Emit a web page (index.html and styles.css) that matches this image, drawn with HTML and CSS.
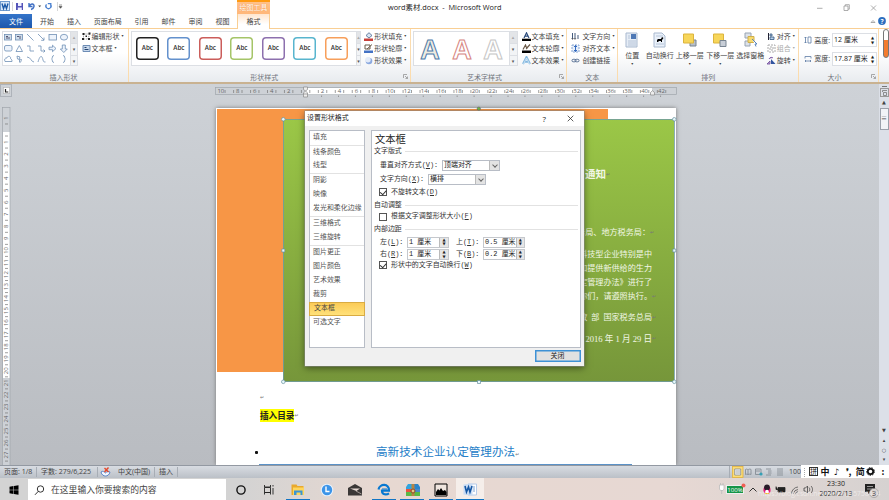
FILE: index.html
```html
<!DOCTYPE html>
<html lang="zh-CN">
<head>
<meta charset="utf-8">
<title>word素材.docx - Microsoft Word</title>
<link rel="stylesheet" href="styles.css">
</head>
<body>
<div class="app">
  <header class="titlebar">
    <div class="quick">
      <svg width="66" height="14" viewBox="0 0 66 14">
        <rect x="0.5" y="1.5" width="9" height="9" fill="#d9e8f8" stroke="#6f9bcf"/><path d="M2 3.5l1.5 5L5 4.5l1.5 4L8 3.5" fill="none" stroke="#1c5aa8" stroke-width="1.4"/>
        <path d="M12.5 2v9M57.5 2v9" stroke="#c4c4c4" stroke-width=".7"/>
        <path d="M16 3h7v7h-7z" fill="#5353b8"/><path d="M18 3h3.500v3H18zM17.800 7.500h4v2.500h-4z" fill="#eef"/>
        <path d="M29 3v3.500h3.500M29.500 6c1-3 5-2.500 4.500.500-.3 1.500-1.500 2.500-3 3" fill="none" stroke="#3f6fc4" stroke-width="1.400"/>
        <path d="M38.200 5.500h3l-1.500 1.800z" fill="#444"/>
        <path d="M46.500 4.300a2.600 2.600 0 1 0 4 0M50.800 6.500V3.600h-3" fill="none" stroke="#4a80d0" stroke-width="1.300"/>
        <path d="M59 5h3M59 6.500h3l-1.500 1.800z" stroke="#555" stroke-width=".6" fill="#444"/>
      </svg>
    </div>
    <div class="context-title">绘图工具</div>
    <div class="doc-title">word素材.docx&nbsp; -&nbsp; Microsoft Word</div>
    <svg class="window-buttons" width="66" height="14" viewBox="0 0 66 14" fill="none" stroke="#999" stroke-width=".8"><path d="M2 8.300h5.500M29 6h4v4.500h-4zM30.300 6V4.700h4v4.500H33M56 5.500l5 5M61 5.500l-5 5"/></svg>
  </header>

  <nav class="tabs">
    <span class="file-tab">文件</span><span class="tab">开始</span><span class="tab">插入</span><span class="tab wide">页面布局</span><span class="tab">引用</span><span class="tab">邮件</span><span class="tab">审阅</span><span class="tab">视图</span><span class="tab active">格式</span>
    <svg class="help" width="20" height="12" viewBox="0 0 20 12"><path d="M2 7.500l2-2 2 2z" fill="#fff" stroke="#888" stroke-width=".7"/><circle cx="13" cy="6" r="3.900" fill="#2c6fc0"/><text x="13" y="8.500" text-anchor="middle" font-size="6.500" font-weight="bold" fill="#fff">?</text></svg>
  </nav>

  <section class="ribbon">
    <div class="group g-insert">
      <div class="tools">
        <div class="gallery">
          <svg width="67" height="33" viewBox="0 0 67 33" fill="none" stroke="#6f8fb5" stroke-width=".8">
            <rect x="1.500" y="2.500" width="7" height="5.500" fill="#cfdcea"/><path d="M3 4.500h2M3 6h4" stroke="#335"/>
            <rect x="12.500" y="2.500" width="7" height="5.500" fill="#cfdcea"/><path d="M17 4v3M14 4.500h2" stroke="#335"/>
            <path d="M24 2l6.500 6.500M35 2l6 6m0-2.500v2.800h-2.800"/>
            <rect x="46" y="2.500" width="7.500" height="5.500" fill="#edf3fb"/><ellipse cx="61" cy="5.200" rx="3.600" ry="2.900" fill="#edf3fb"/>
            <rect x="1.500" y="13.500" width="7.500" height="5.500" rx="1.500" fill="#edf3fb"/><path d="M13 19.500l3.300-6 3.200 6zM24 14h3v5h4M35 14h3v5h4m-1.500-1.500l1.500 1.500-1.500 1.500"/>
            <path d="M46 15.200h3.500v-2l3.500 3.300-3.500 3.200v-2H46zM59.300 13v4h-2l3.500 3.500 3.500-3.500h-2v-4z" fill="#edf3fb"/>
            <path d="M2 29.500c-1-2 0-4 2-3.500 0-2.500 4-2 3.500 0-.5 1 2 1 1.500 3.500zM14 24l3 1-1 2 2.500.500-1 3M14 24l.5 3 2 .500v3M24 25c4 0 4 5 7 5M35 30c2-7 4-7 5-2 .5 2 1 2 2.500 2M51 23.500c-2.500 0-1 3-2.500 3.500 1.500.500 0 3.500 2.500 3.500M60 23.500c2.500 0 1 3 2.500 3.500-1.500.500 0 3.500-2.500 3.500"/>
          </svg>
          <div class="scroller"><i class="off">▴</i><i>▾</i><i>▾</i></div>
        </div>
        <div class="commands c1">
          <div class="cmd"><svg class="ic" viewBox="0 0 9 9"><path d="M1.500 2l6 0-1.500 5-4.500 0z" fill="none" stroke="#888" stroke-dasharray="1"/><path d="M.5 1h2v2h-2zM6.500.500h2v2h-2zM0 6h2v2H0zM6 6h2v2H6zM3.500 3.500h1.500v1.500H3.500z" fill="#222"/></svg><span>编辑形状</span><b>▾</b></div>
          <div class="cmd"><svg class="ic" viewBox="0 0 9 9"><path d="M1 1.500h7v6H1z" fill="#c9d9ec" stroke="#6d8cb5"/><path d="M2.500 3.500h2M2.500 5.500h4" stroke="#24436f"/></svg><span>文本框</span><b>▾</b></div>
        </div>
      </div>
      <div class="caption">插入形状</div>
    </div>

    <div class="group g-style">
      <div class="tools">
        <div class="gallery swatches">
          <div class="swatch s-black">Abc</div><div class="swatch s-blue">Abc</div><div class="swatch s-red">Abc</div><div class="swatch s-green">Abc</div><div class="swatch s-purple">Abc</div><div class="swatch s-teal">Abc</div><div class="swatch s-orange">Abc</div>
          <div class="scroller"><i class="off">▴</i><i>▾</i><i>▾</i></div>
        </div>
        <div class="commands c2">
          <div class="cmd"><svg class="ic" viewBox="0 0 9 9"><path d="M2 3.500L5 .700l3 2.800L5 6z" fill="#d7e4f3" stroke="#46638c" stroke-width=".8"/><path d="M0 6.500h9V9H0z" fill="#c8403a"/></svg><span>形状填充</span><b>▾</b></div>
          <div class="cmd"><svg class="ic" viewBox="0 0 9 9"><path d="M1 1h5v4H1zM3 5L8 .5" fill="none" stroke="#6b5a48"/><path d="M0 6.500h9V9H0z" fill="#4472c4"/></svg><span>形状轮廓</span><b>▾</b></div>
          <div class="cmd"><svg class="ic" viewBox="0 0 9 9"><circle cx="5" cy="5" r="3.300" fill="#8ba9df"/><circle cx="4" cy="3.800" r="2.700" fill="#e3ebf8"/></svg><span>形状效果</span><b>▾</b></div>
        </div>
      </div>
      <div class="caption">形状样式</div><svg class="launch" viewBox="0 0 5 5"><path d="M.5 4V.5H4M2 2l2.300 2.300M4.500 2.500v2h-2" fill="none" stroke="#888" stroke-width=".7"/></svg>
    </div>

    <div class="group g-art">
      <div class="tools">
        <div class="gallery letters">
          <svg width="95" height="33" viewBox="0 0 95 33" text-anchor="middle"><text x="16" y="26.500" class="wa wa1">A</text><text x="48" y="26.500" class="wa wa2">A</text><text x="79" y="26.500" class="wa wa3">A</text></svg>
          <div class="scroller"><i class="off">▴</i><i>▾</i><i>▾</i></div>
        </div>
        <div class="commands c3">
          <div class="cmd"><svg class="ic" viewBox="0 0 9 9"><path d="M2 6L4.500.800 7 6M3 4.200h3" fill="none" stroke="#2b4b7c" stroke-width="1.200"/><path d="M0 6.700h9V9H0z"/></svg><span>文本填充</span><b>▾</b></div>
          <div class="cmd"><svg class="ic" viewBox="0 0 9 9"><path d="M1 5.500L3.500 1 5 5M4 5l4-4.500" fill="none" stroke="#6b5a48" stroke-width="1.200"/><path d="M0 6.500h9V9H0z"/></svg><span>文本轮廓</span><b>▾</b></div>
          <div class="cmd"><svg class="ic" viewBox="0 0 9 9"><path d="M1 8L4.500 1 8 8M3 5.800h3" fill="none" stroke="#82b7df" stroke-width="2"/><path d="M1.500 8L4.500 2l3 6" fill="none" stroke="#e8f4fc" stroke-width=".7"/></svg><span>文本效果</span><b>▾</b></div>
        </div>
      </div>
      <div class="caption">艺术字样式</div><svg class="launch" viewBox="0 0 5 5"><path d="M.5 4V.5H4M2 2l2.300 2.300M4.500 2.500v2h-2" fill="none" stroke="#888" stroke-width=".7"/></svg>
    </div>

    <div class="group g-text">
      <div class="tools">
        <div class="commands c4">
          <div class="cmd"><svg class="ic" viewBox="0 0 9 9"><path d="M1.500 1v6M4 1v6M7 3v4" stroke="#445b7d"/><path d="M.5 6l1 1.500L2.500 6M3 6l1 1.500L5 6" stroke="#444" fill="none" stroke-width=".6"/></svg><span>文字方向</span><b>▾</b></div>
          <div class="cmd"><svg class="ic" viewBox="0 0 9 9"><path d="M1 1h7v7H1z" fill="#e7effa" stroke="#88a7d4" stroke-dasharray="2 1"/><path d="M4.500 1.500v6M3 3l1.500-1.500L6 3M3 6l1.500 1.500L6 6" fill="none" stroke="#356bc0"/></svg><span>对齐文本</span><b>▾</b></div>
          <div class="cmd"><svg class="ic" viewBox="0 0 9 9"><rect x="1" y="3.300" width="4" height="2.500" rx="1.200" fill="none" stroke="#5b7396"/><rect x="4" y="3.300" width="4" height="2.500" rx="1.200" fill="none" stroke="#5b7396"/></svg><span>创建链接</span></div>
        </div>
      </div>
      <div class="caption">文本</div>
    </div>

    <div class="group g-arrange">
      <div class="tools">
        <div class="big b1"><svg viewBox="0 0 14 16"><path d="M1 1h11v14H1z" fill="#e6edf6" stroke="#a9b9cf"/><path d="M6 2h5v5H6z" fill="#4e78b5"/><path d="M3 4h2M3 6h2M3 9h8M3 11h8M3 13h8" stroke="#b6c4d8"/></svg><span>位置</span><b>▾</b></div>
        <div class="big b2"><svg viewBox="0 0 14 16"><path d="M1 1h8l3 3v11H1z" fill="#eaf1fa" stroke="#a9b9cf"/><path d="M3 4h7M3 12h8" stroke="#b6c4d8"/><path d="M4 10V8l1-1h3l1-2 1.500 1L9 8v2H8V9H5.500v1z"/></svg><span>自动换行</span><b>▾</b></div>
        <div class="big b3"><svg viewBox="0 0 14 16"><path d="M7 8h6v6H7z" fill="#b8bfc9" stroke="#798592"/><path d="M.5 2h10v9H.5z" fill="#f7d65a" stroke="#dcb43d"/></svg><span>上移一层</span><b>▾</b></div>
        <div class="big b4"><svg viewBox="0 0 14 16"><path d="M.5 2h10v9H.5z" fill="#f7d65a" stroke="#dcb43d"/><path d="M7 8.500h6v6H7z" fill="#c8ced7" stroke="#798592"/></svg><span>下移一层</span><b>▾</b></div>
        <div class="big b5"><svg viewBox="0 0 14 16"><path d="M2 1h6v5H2zM2 9h5v5H2z" fill="#dde2e9" stroke="#98a4b3"/><path d="M5 4.500h6v6H5z" fill="#f7da6d" stroke="#cfaf4c"/><path d="M9 7l5 5h-2l1 2.500" fill="#fff" stroke="#5985bd"/></svg><span>选择窗格</span></div>
        <div class="commands c5">
          <div class="cmd"><svg class="ic" viewBox="0 0 9 9"><path d="M1.500 1v7" stroke="#223"/><path d="M3 2h2v2H3zM3 5h4v2.500H3z" fill="#b8d2ef" stroke="#35577f" stroke-width=".8"/></svg><span>对齐</span><b>▾</b></div>
          <div class="cmd disabled"><svg class="ic" viewBox="0 0 9 9"><path d="M1 1h7v7H1zM3 3h3v3H3z" fill="none" stroke="#aaa" stroke-dasharray="2 1"/></svg><span>组合</span><b>▾</b></div>
          <div class="cmd"><svg class="ic" viewBox="0 0 9 9"><path d="M4 8V3l4.500 5z" fill="#3155a0"/><path d="M0 8h3V5zM2 3c1-2 3-2 4-1" fill="#c8a4d8" stroke="#6a4b99" stroke-width=".8"/></svg><span>旋转</span><b>▾</b></div>
        </div>
      </div>
      <div class="caption">排列</div>
    </div>

    <div class="group g-size">
      <div class="sizes">
        <svg viewBox="0 0 8 8"><path d="M4 1h3v6H4zM1.500 1v6M.5 2l1-1 1 1M.5 6l1 1 1-1" fill="none" stroke="#5d7ba4" stroke-width=".8"/></svg><label>高度:</label><div class="num">12 厘米<i>▲<br>▼</i></div>
        <svg viewBox="0 0 8 8"><path d="M1 3.500v-2h6v2M1 6h6M2 5L1 6l1 1M6 5l1 1-1 1" fill="none" stroke="#5d7ba4" stroke-width=".8"/></svg><label>宽度:</label><div class="num">17.87 厘米<i>▲<br>▼</i></div>
      </div>
      <div class="caption">大小</div><svg class="launch" viewBox="0 0 5 5"><path d="M.5 4V.5H4M2 2l2.300 2.300M4.500 2.500v2h-2" fill="none" stroke="#888" stroke-width=".7"/></svg>
    </div>
    <div class="edge-meter"></div>
  </section>

  <main class="workspace">
    <div class="left-ruler">
      <div class="tab-stop"><svg width="7" height="7" viewBox="0 0 7 7"><path d="M.3.300h6.400v6.400H.3z" fill="#fff" stroke="#999" stroke-width=".6"/><path d="M2.500 2v3h2.800" fill="none" stroke="#222" stroke-width="1.200"/></svg></div>
      <svg id="vruler" width="9" height="358" viewBox="2 106 9 358"></svg>
    </div>
    <div class="canvas">
      <svg id="hruler" width="864" height="15" viewBox="13 83 864 15"></svg>
      <article class="page">
        <p class="empty"><span class="mark">↵</span></p>
        <p class="toc"><mark>插入目录</mark><span class="mark">↵</span></p>
        <div class="heading-row"><i class="bullet"></i><h1>高新技术企业认定管理办法<span class="mark">↵</span></h1></div>
        <div class="heading-line"></div>
        <div class="shape orange"></div>
        <div class="shape green">
          <p class="notice">通知<span class="mark">↵</span></p>
          <p class="to">务局、地方税务局：<span class="mark">↵</span></p>
          <p class="l1">科技型企业特别是中</p>
          <p class="l2">和提供新供给的生力</p>
          <p class="l3">定管理办法》进行了</p>
          <p class="l4">你们，请遵照执行。<span class="mark">↵</span></p>
          <p class="l5">政&nbsp; 部&nbsp; 国家税务总局<span class="mark">↵</span></p>
          <p class="l6">2016 年 1 月 29 日<span class="mark">↵</span></p>
        </div>
        <svg class="handles" width="462" height="290" viewBox="215 104 462 290"><path d="M283.500 118.500h391v262h-391z" fill="none" stroke="#6f9ba5" stroke-width=".8"/><g fill="#e8f8fb" stroke="#67909f" stroke-width=".7"><circle cx="283.300" cy="118.300" r="1.800"/><circle cx="674.300" cy="118.300" r="1.800"/><circle cx="283.300" cy="380.800" r="1.800"/><circle cx="674.300" cy="380.800" r="1.800"/><path d="M281.800 248h3v3h-3zM672.800 248h3v3h-3zM477.500 379.500h3v3h-3z"/></g><circle cx="478.800" cy="107.700" r="1.700" fill="#7bc043" stroke="#557"  stroke-width=".5"/></svg>
      </article>
    </div>
    <div class="vscroll">
      <div class="split"></div>
      <div class="ruler-toggle"><svg width="6" height="6" viewBox="0 0 6 6" fill="none" stroke="#777" stroke-width=".8"><path d="M.5 2V.5H5M1.500 2.500h3v3h-3z"/></svg></div>
      <span class="up">▲</span><div class="thumb">≡</div>
      <div class="nav"><span>▼</span><span class="line">▴</span><span>○</span><span>▾</span></div>
    </div>

    <section class="dialog">
      <header><span>设置形状格式</span><span class="q">?</span><svg width="7" height="7" viewBox="0 0 7 7"><path d="M.7.700l5.600 5.600M6.300.700L.7 6.300" stroke="#333" stroke-width=".8"/></svg></header>
      <div class="dialog-body">
        <ul class="cats"><li>填充</li><li class="sep">线条颜色</li><li>线型</li><li class="sep">阴影</li><li>映像</li><li>发光和柔化边缘</li><li class="sep">三维格式</li><li>三维旋转</li><li class="sep">图片更正</li><li>图片颜色</li><li>艺术效果</li><li>裁剪</li><li class="on">文本框</li><li>可选文字</li></ul>
        <div class="panel">
          <h2>文本框</h2>
          <h3>文字版式</h3>
          <div class="field f1"><label>垂直对齐方式(<u>V</u>)：</label><div class="select">顶端对齐<i></i></div></div>
          <div class="field f2"><label>文字方向(<u>X</u>)：</label><div class="select">横排<i></i></div></div>
          <div class="check k1"><i class="checked"></i><span>不旋转文本(<u>D</u>)</span></div>
          <h3 class="h-auto">自动调整</h3>
          <div class="check k2"><i></i><span>根据文字调整形状大小(<u>F</u>)</span></div>
          <h3 class="h-pad">内部边距</h3>
          <div class="margins">
            <label>左(<u>L</u>)：</label><div class="spin">1 厘米<i>▲<br>▼</i></div><label class="second">上(<u>T</u>)：</label><div class="spin">0.5 厘米<i>▲<br>▼</i></div>
            <label>右(<u>R</u>)：</label><div class="spin">1 厘米<i>▲<br>▼</i></div><label class="second">下(<u>B</u>)：</label><div class="spin">0.2 厘米<i>▲<br>▼</i></div>
          </div>
          <div class="check k3"><i class="checked"></i><span>形状中的文字自动换行(<u>W</u>)</span></div>
        </div>
      </div>
      <button class="close">关闭</button>
    </section>
  </main>

  <footer class="status">
    <span class="st1">页面: 1/8</span><span class="st2">字数: 279/6,225</span>
    <span class="st3"><svg width="11" height="10" viewBox="0 0 11 10"><path d="M1 5c2-1.500 3 0 4.500 1C7 4 9 4.500 10 5c-.5 3-3 4-4.500 4S1.500 8 1 5z" fill="#f5f8ff" stroke="#5c85c7"/><path d="M4.500 1l4 4M8.500.500l-4 4.500" stroke="#e5482b" stroke-width="1.400"/></svg></span>
    <span class="st4">中文(中国)</span><span class="st5">插入</span>
    <div class="views">
      <svg width="58" height="12" viewBox="0 0 58 12" fill="none" stroke="#7d858e" stroke-width=".8"><rect x="2.500" y=".5" width="10.500" height="11" fill="#fbdc77" stroke="#e3b23a"/><path d="M4.700 3h6v6h-6z" fill="#fff"/><path d="M5.500 5h4.500M5.500 7h4.500M15.500 3.500c1-.7 2-.5 2.500.5.500-1 2-1.200 3-.5v5c-1-.5-2.500-.5-3 .3-.5-.8-1.500-.8-2.500-.3zM18 4v5"/><path d="M25.500 3h5.500v5.500h-5.500zM26 5h4"/><circle cx="31" cy="8" r="1.600" fill="#35a0b5" stroke="none"/><path d="M36 3h5M38 5h3.500M38 7h3.500M36 9h5M47 3h6M47 5h6M47 7h6M47 9h6"/></svg>
      <span>100</span>
    </div>
    <div class="ime">
      <svg width="8" height="12" viewBox="0 0 8 12"><path d="M3.500 2v9" stroke="#aaa" stroke-dasharray="1"/></svg>
      <span class="boxed">拼</span><span>中</span><span class="note">♪</span><span class="punct">❜,</span><span>简</span><svg width="9" height="9" viewBox="0 0 9 9"><circle cx="4.500" cy="4.500" r="2.700" fill="none" stroke="#111" stroke-width="1.800"/><circle cx="4.500" cy="4.500" r="3.900" fill="none" stroke="#111" stroke-dasharray="1.500 1.200"/></svg><span class="dots">:</span>
    </div>
  </footer>

  <div class="taskbar">
    <div class="start"><svg width="10" height="10" viewBox="0 0 10 10"><path d="M.5 1.700l4-.6v3.600h-4zM5 1l4.500-.700v4.400H5zM.5 5.200h4v3.700l-4-.6zM5 5.200h4.500v4.500L5 9z"/></svg></div>
    <div class="search"><svg width="11" height="11" viewBox="0 0 11 11" fill="none" stroke="#333"><circle cx="6.500" cy="4" r="3.200"/><path d="M4.300 6.300L1 9.800"/></svg><span>在这里输入你要搜索的内容</span></div>
    <div class="apps">
      <div class="app-ic"><svg viewBox="0 0 16 16"><circle cx="8" cy="8" r="4.100" fill="none" stroke="#111" stroke-width="1.400"/></svg></div>
      <div class="app-ic"><svg viewBox="0 0 16 16" fill="none" stroke="#222"><path d="M3.500 3v2h6V3M3.500 12.500v-2h6v2M3.500 5.500v5h6v-5zM12 3v1.500M12 6v6.500" stroke-width=".9"/></svg></div>
      <div class="app-ic run"><svg viewBox="0 0 16 16"><path d="M1.500 2.500h5l1 1.500h6v9h-12z" fill="#e9a92d"/><path d="M3 5.500h11v7.500H3z" fill="#ffd65c"/><path d="M4 13V8.500h8.500V13h-2v-2.500H6.500V13z" fill="#3a94d3"/></svg></div>
      <div class="app-ic"><svg viewBox="0 0 16 16"><circle cx="8" cy="8" r="6.300" fill="#e7f1fb"/><circle cx="8" cy="8" r="5.200" fill="#3b94e8"/><path d="M7 4.500v5h3.500" fill="none" stroke="#fff" stroke-width="1.400"/></svg></div>
      <div class="app-ic"><svg viewBox="0 0 16 16"><path d="M1 6l7-4 7 4v7.500H1z" fill="#3b3837"/><path d="M3 6.500h10L9.500 9z" fill="#e7dad4"/><path d="M9 9l5.500 3" stroke="#e7dad4" stroke-width=".6"/></svg></div>
      <div class="app-ic run"><svg viewBox="0 0 16 16"><path d="M2.500 7.500C3.500 1.500 13.500 1 13 8.700H6C6 13 10.500 13 13 11.300" fill="none" stroke="#0878d1" stroke-width="2.200"/><path d="M6 7h5" stroke="#0878d1" stroke-width="1"/></svg></div>
      <div class="app-ic run"><svg viewBox="0 0 16 16"><path d="M1 10V5l2-3h4v8z" fill="#32a4df"/><path d="M9 2h4l2 3v5H9z" fill="#2b84cc"/><path d="M1 7h6v3H1z" fill="#e75440"/><path d="M9 7h6v3H9z" fill="#4a89c8"/><path d="M1 10h14v4H1z" fill="#59b947"/><path d="M6.500 2h3v12h-3z" fill="#b68445"/><circle cx="8" cy="9" r="2" fill="#e7c486" stroke="#8a4b25"/></svg></div>
      <div class="app-ic run"><svg viewBox="0 0 16 16"><path d="M2 2h12v12H2z" fill="#efe5df" stroke="#000"/><path d="M3 13v-3l2-3 1.500 1.500L8 6l2 3 2-1 1.500 2v3z"/></svg></div>
      <div class="app-ic run current"><svg viewBox="0 0 16 16"><path d="M6 2h8.500v11H6z" fill="#fff" stroke="#b6cbe8"/><path d="M1.500 2.500l9-1v12l-9-1z" fill="#c9dcf4"/><path d="M3 4l1.500 6L6.500 5l1.500 5 2-6" fill="none" stroke="#1557a4" stroke-width="1.600"/><path d="M11 5h2M11 7h2M11 9h2" stroke="#7ba2d4"/></svg></div>
    </div>
    <div class="tray">
      <svg width="100" height="20" viewBox="717 478 100 20">
        <path d="M719.500 484h4.500v4l-1 1.500h-2.500l-1-1.500zM720.500 482v2M723 482v2M721.700 489v4" fill="#fff" stroke="#bbb" stroke-width=".8"/>
        <rect x="726.500" y="484.500" width="17" height="8" fill="#159447" stroke="#eee"/><text x="735" y="491" text-anchor="middle" font-size="6" fill="#fff">100%</text><circle cx="743.500" cy="484.500" r="2" fill="#f06055"/>
        <path d="M749.500 490.500l3.500-3.500 3.500 3.500" fill="none" stroke="#333"/>
        <ellipse cx="767" cy="489" rx="3.600" ry="4" fill="#e41c79"/><circle cx="767" cy="486.500" r="2.900" fill="#261b27"/><ellipse cx="767" cy="490.700" rx="1.800" ry="2" fill="#fff"/><path d="M765 492.500h4" stroke="#f2b629"/>
        <path d="M778 486.500h7v4.500h-7zM776 485.500v3h2" fill="#222" stroke="#222" stroke-width=".8"/>
        <path d="M791.500 492.500a7 7 0 0 1 6.500-6.500M793.500 492.500a5 5 0 0 1 4.500-4M795.500 492.500a3 3 0 0 1 2.500-1.800" fill="none" stroke="#555" stroke-width=".8"/>
        <path d="M804 487h1.500l2-2v7l-2-2H804zM809 486.500c1 1 1 3 0 4M811 485c2 2 2 5 0 7" fill="none" stroke="#444" stroke-width=".8"/>
      </svg>
      <div class="clock">23:30<br>2020/2/13</div>
      <div class="notify"><svg width="16" height="16" viewBox="0 0 16 16"><path d="M1 1h10v8H6l-2 2V9H1z" fill="#222"/><path d="M3 3.500h6M3 6h6" stroke="#ccc" stroke-width=".7"/><circle cx="10" cy="10" r="4.600" fill="#d9d3d1" stroke="#888" stroke-width=".5"/><text x="10" y="12.600" text-anchor="middle" font-size="7" fill="#111">3</text></svg></div>
      <div class="watermark">https://blog.csdn.net/weixin_45758414</div>
    </div>
  </div>
</div>
<script src="script.js"></script>
</body>
</html>
```
FILE: styles.css
```css
* { box-sizing: border-box; }
body { margin: 0; overflow: hidden; background: #fff; color: #444; font: 7px/9px "Open Sans", "Noto Sans CJK SC", sans-serif; -webkit-text-size-adjust: none; }
p, h1, h2, h3, ul { margin: 0; padding: 0; font-weight: normal; list-style: none; }
i, b { font-style: normal; font-weight: normal; }
svg { display: block; flex: none; }
.app { width: 889px; height: 500px; display: flex; flex-direction: column; }

.titlebar { height: 14px; display: flex; flex: none; }
.quick { width: 237px; }
.context-title { width: 33px; padding-top: 3px; text-align: center; color: #fff; background: linear-gradient(#ff9b12 0 2px, #ffc18a 2px, #ffb779); white-space: nowrap; text-shadow: 0 0 1px #e77a20; }
.doc-title { margin-left: 118px; width: 240px; padding-top: 2px; font-size: 7.350px; line-height: 10px; color: #222; white-space: nowrap; }
.window-buttons { margin-left: 187px; }

.tabs { height: 15px; display: flex; flex: none; border-bottom: 1px solid #f9cf94; line-height: 15px; }
.file-tab { width: 32px; background: linear-gradient(#3374c9, #1e58ac); color: #fff; text-align: center; }
.tab { width: 27px; text-align: center; white-space: nowrap; }
.file-tab + .tab { margin-left: 1.500px; }
.tab.wide { width: 40.500px; }
.tab.active { width: 33px; height: 15px; margin-left: 1px; border: solid #f9cf94; border-width: 0 1px; background: linear-gradient(#ffe6cf, #fff 70%); }
.help { margin-left: auto; margin-top: 1px; }

.ribbon { height: 55px; flex: none; display: flex; background: linear-gradient(#fff 0, #fff 45%, #e8ebef 100%); border-bottom: 2px solid #c9b291; }
.group { position: relative; border-right: 1px solid #fbdcae; display: flex; flex-direction: column; }
.g-insert { width: 129px; } .g-style { width: 282px; } .g-art { width: 157px; } .g-text { width: 51px; } .g-arrange { width: 181px; } .g-size { width: 80px; }
.tools { height: 43.500px; display: flex; padding: 2px 0 0 2px; }
.caption { text-align: center; color: #70757c; line-height: 9px; }
.g-insert .caption { padding-right: 1px; } .g-style .caption { padding-right: 10px; } .g-art .caption { padding-right: 8px; } .g-size .caption { padding-right: 8px; }
.launch { width: 5px; height: 5px; position: absolute; right: 2px; bottom: 3px; }
.gallery { height: 35px; display: flex; border: 1px solid #dcdfe4; background: #fff; flex: none; }
.scroller { width: 8px; margin-left: auto; display: flex; flex-direction: column; background: #f2f4f6; border-left: 1px solid #dcdfe4; }
.scroller i { flex: 1; text-align: center; font: 5px/11px "DejaVu Sans"; color: #555; border-bottom: 1px solid #dcdfe4; }
.scroller i:last-child { border-bottom: 0; }
.scroller .off { background: #e3e5e8; color: #aaa; }
.g-insert .gallery { width: 76px; }
.commands { margin-top: -1px; }
.cmd { height: 12px; display: flex; align-items: center; white-space: nowrap; }
.ic { width: 9px; height: 9px; margin-right: 1px; }
.cmd b { margin-left: 2px; font: 4px/8px "DejaVu Sans"; width: 4px; }
.c1 { margin-left: 3.500px; } .c2 { margin-left: 3.500px; } .c3 { margin-left: 4px; } .c4 { margin-left: 2px; }
.c4 .ic { margin-right: 2px; }
.disabled { color: #aaa; }
.g-style .gallery { width: 230px; } .g-art .gallery { width: 105px; }
.swatches { padding-left: 4px; gap: 8.500px; align-items: center; }
.swatch { width: 23px; height: 23px; border-radius: 4px; box-shadow: inset 0 0 0 1.500px currentColor; -webkit-text-fill-color: #333; font-size: 6.300px; line-height: 22px; text-align: center; font-weight: 600; background: #fff; flex: none; }
.swatches .scroller { height: 33px; }
.s-black { color: #222; } .s-blue { color: #6391cd; } .s-red { color: #cb5d5a; } .s-green { color: #a5c568; } .s-purple { color: #8d70ae; } .s-teal { color: #58b5ce; } .s-orange { color: #f79f5b; }
.wa { font: bold 27px "Liberation Sans"; stroke-width: 1px; }
.wa1 { fill: #eeece1; stroke: #4f7bab; } .wa2 { fill: #fff; stroke: #d68480; } .wa3 { fill: #fff; stroke: #c6c6c6; }
.g-arrange .tools { padding-left: 0; }
.big { display: flex; flex-direction: column; align-items: center; white-space: nowrap; flex: none; }
.big svg { width: 14px; height: 16px; margin-top: 1px; }
.big span { margin-top: 3px; height: 9px; }
.big b { font: 4px/8px "DejaVu Sans"; }
.b1 { width: 26px; } .b2 { width: 29px; } .b3 { width: 31px; } .b4 { width: 30px; } .b5 { width: 30px; }
.b1 { margin-left: 1px; }
.c5 { margin-left: 1.500px; }
.sizes { height: 43.500px; padding: 4px 0 0 5px; display: grid; grid-template-columns: 8px 18px 45px; grid-auto-rows: 14px; row-gap: 4.500px; align-items: center; column-gap: 1px; }
.sizes svg { width: 8px; height: 8px; }
.sizes label { text-align: center; white-space: nowrap; }
.num { height: 14px; border: 1px solid #dcdfe4; background: #fff; display: flex; justify-content: space-between; padding: 0 2px 0 1px; line-height: 12px; white-space: nowrap; color: #222; }
.num i { font: 4px/5px "DejaVu Sans"; padding-top: 1px; }
.edge-meter { width: 6px; height: 29px; margin-left: 4px; border: 1px solid #777; border-radius: 3px; background: linear-gradient(#fff 36%, #f47c2e 36%); }

.workspace { position: relative; height: 381px; flex: none; display: flex; background: linear-gradient(#ced2d7, #b9bcc1); }
.left-ruler { width: 13px; flex: none; }
.tab-stop { width: 12px; height: 13px; border: 1px solid #aeb3ba; padding: 2px; margin-bottom: 10px; }
#vruler { margin-left: 2px; }
.canvas { width: 866px; flex: none; height: 381px; overflow: hidden; }
.rn { font: 6px "Open Sans", sans-serif; fill: #666; text-anchor: middle; }
.page { position: relative; width: 460px; height: 357px; margin: 9px 0 0 203px; background: #fff; box-shadow: 0 0 4px #777; padding-top: 283px; }
.shape { position: absolute; }
.orange { left: 1px; top: 1px; width: 391px; height: 263px; background: #f79646; }
.green { left: 67px; top: 11px; width: 391px; height: 263px; background: linear-gradient(#9bc747, #76963a); color: #f2f7e6; font: 8.100px/14px "Liberation Serif", "Noto Sans CJK SC", serif; padding-top: 49px; text-align: right; }
.green p { padding-right: 22px; white-space: nowrap; height: 14px; position: relative; }
.green .mark { position: absolute; }
.green .notice { font-size: 10.500px; font-weight: bold; padding-right: 68px; margin-bottom: 44px; }
.green .to { margin-bottom: 8px; padding-right: 24px; }
.green .l4 { margin-bottom: 7px; }
.green .l5 { margin-bottom: 7px; }
.green .l6 { font-size: 8.600px; }
.handles { position: absolute; left: -1px; top: -3px; }
.mark { color: #777; font: 5px/12px "DejaVu Sans"; }
.empty { height: 18px; padding-left: 44px; }
.toc { height: 13px; padding-left: 44px; display: flex; font: bold 8.600px/13px "Noto Sans CJK SC"; color: #222; }
.toc mark { background: #ff0; color: #222; height: 13px; }
.heading-row { display: flex; margin-top: 20px; height: 18px; align-items: center; padding-left: 39px; }
.bullet { width: 3px; height: 3px; background: #111; border-radius: 1px; margin-top: 2px; }
.heading-row h1 { font: 11.600px/18px "Noto Sans CJK SC"; color: #2580c8; margin-left: 118px; white-space: nowrap; }
.heading-line { width: 373px; height: 1.500px; margin: 4px 0 0 43px; background: #5b92c7; }
.vscroll { width: 10px; background: #dce0e8; display: flex; flex-direction: column; align-items: center; }
.split { width: 5px; height: 1px; background: #777; margin-top: 2px; }
.ruler-toggle { width: 9px; height: 9px; border: 1px solid #999; margin-top: 1px; padding: 1px; overflow: hidden; }
.up { font: 5px/10px "DejaVu Sans"; margin-bottom: 1px; }
.thumb { width: 9px; height: 22px; border: 1px solid #9ba1ab; background: #f2f4f7; text-align: center; line-height: 19px; font-size: 6px; }
.nav { margin-top: auto; display: flex; flex-direction: column; align-items: center; font: 5px/9.700px "DejaVu Sans"; }

.dialog { position: absolute; left: 305px; top: 27px; width: 279px; height: 255px; background: #f0f0f0; box-shadow: 0 0 0 .5px #8a8a8a, 0 2px 7px rgba(0,0,0,.5); color: #333; font: 6.950px/9px "Liberation Mono", "Noto Sans CJK SC", monospace; }
.dialog > header { height: 15px; background: #fff; display: flex; align-items: center; padding-left: 2px; color: #222; }
.dialog .q { margin-left: auto; margin-right: 21px; font: 8px "Open Sans"; }
.dialog > header svg { margin-right: 10px; }
.dialog-body { display: flex; padding: 4px 3px 0 4px; gap: 6px; }
.cats { width: 56px; height: 218px; background: #fff; border: 1px solid #b8bdc6; }
.cats li { height: 14px; line-height: 13px; padding-left: 3px; white-space: nowrap; color: #555; }
.cats li:first-child { height: 13.500px; line-height: 12px; }
.cats li.sep { border-top: 1px solid #e2e2e2; height: 14.800px; }
.cats li.on { height: 14px; margin: 0 -1px; padding-left: 4px; border: 1px solid #d9ab42; line-height: 11px; background: linear-gradient(#fbcb57, #ffe17a); color: #444; }
.panel { width: 210px; height: 218px; background: #fff; border: 1px solid #b8bdc6; padding: 2px 2px 0; }
.panel h2 { font-size: 10.300px; line-height: 14px; padding-left: 1px; color: #222; }
.panel h3 { display: flex; align-items: center; font-size: 6.950px; height: 9px; gap: 3px; margin-top: -.500px; }
.panel h3::after { content: ""; flex: 1; height: 1px; background: #e2e2e2; }
.panel label, .panel span { white-space: nowrap; }
.field { display: flex; align-items: center; height: 12px; padding-left: 6px; }
.f1 { margin-top: 4px; } .f1 label { width: 62px; } .f2 { margin-top: 2px; } .f2 label { width: 48px; }
.select { width: 58px; height: 11px; border: 1px solid #b8bdc6; padding-left: 1px; display: flex; justify-content: space-between; line-height: 9px; color: #222; }
.select i { width: 10px; background: #e3e3e3; border-left: 1px solid #bbb; display: flex; justify-content: center; align-items: center; }
.select i::before { content: ""; width: 3px; height: 3px; border: solid #666; border-width: 0 .7px .7px 0; transform: translateY(-1px) rotate(45deg); }
.check { display: flex; align-items: center; height: 9px; padding-left: 5px; gap: 4px; }
.check i { width: 8px; height: 8px; border: 1px solid #555; flex: none; display: flex; justify-content: center; }
.check .checked::before { content: ""; width: 2.500px; height: 5px; border: solid #333; border-width: 0 1px 1px 0; transform: rotate(42deg) translateY(-.5px); }
.k1 { margin-top: 2px; } .panel .h-auto { margin-top: 4px; } .k2 { margin-top: 2.500px; } .panel .h-pad { margin-top: 4px; }
.margins { margin-top: 2px; padding-left: 6px; display: grid; grid-template-columns: 27px 42px 34px 42px; grid-auto-rows: 12.400px; align-items: center; }
.second { padding-left: 7px; }
.spin { height: 11px; border: 1px solid #c5c8cd; display: flex; justify-content: space-between; padding-left: 1px; line-height: 9px; white-space: nowrap; color: #222; }
.spin i { width: 9px; background: #e6e6e6; border-left: 1px solid #bbb; text-align: center; font: 4px/4.500px "DejaVu Sans"; }
.k3 { margin-top: 0; }
.close { display: block; width: 46px; height: 12px; margin: 2px 0 0 229.500px; padding: 0; background: #e1e1e1; border: 0; box-shadow: inset 0 0 0 1.500px #3e91d5; font: inherit; line-height: 11px; color: #222; }

.status { height: 13px; flex: none; display: flex; align-items: center; background: linear-gradient(#d8dce2, #bbc0c7); border-top: 1px solid #9399a2; line-height: 12px; white-space: nowrap; }
.status > span { height: 10px; line-height: 10px; border-right: 1px solid #a7adb5; }
.st1 { width: 37px; padding-left: 4px; } .st2 { width: 61px; padding-left: 4px; } .st3 { width: 15px; padding-left: 2px; }
.status > .st3 { border: 0; }
.st4 { width: 42px; padding-left: 5px; } .st5 { width: 23px; padding-left: 4px; }
.views { display: flex; align-items: center; margin-left: auto; border-left: 1px solid #a7adb5; width: 72px; }
.views span { margin-left: 1px; }
.ime { width: 88px; height: 13px; background: #fff; display: flex; align-items: center; color: #111; font: bold 9px/12px "Noto Sans CJK SC", sans-serif; margin-top: -1px; }
.ime > span { width: 11.800px; text-align: center; }
.ime .boxed { font-size: 7px; line-height: 7px; width: 9px; height: 9px; border: 1px solid #333; font-weight: normal; margin-right: 1px; }
.ime .note { font-family: "DejaVu Sans"; }
.ime .dots { margin-left: 2px; }

.taskbar { height: 23px; flex: none; display: flex; background: linear-gradient(90deg, #d3d3d3 0, #d3d3d3 27%, #e7d8d1 42%, #e7d8d3 75%, #d6d2d1 100%); }
.start { width: 28px; padding: 7px 0 0 9px; }
.search { width: 198px; height: 22px; margin-top: 1px; background: #fff; display: flex; align-items: center; padding-left: 6px; color: #444; font-size: 8.800px; gap: 6px; white-space: nowrap; }
.apps { display: flex; }
.app-ic { width: 28.700px; height: 23px; padding: 3.500px 0 0 6.500px; }
.app-ic svg { width: 16px; height: 16px; }
.run { background: linear-gradient(#1275c4, #1275c4) center bottom / 24px 2px no-repeat; }
.current { background: linear-gradient(#1275c4, #1275c4) center bottom / 28px 2px no-repeat, #f5eeea; }
.tray { position: relative; width: 172px; margin-left: auto; display: flex; }
.tray > svg { margin-top: 1px; }
.clock { width: 38px; text-align: center; line-height: 10.500px; padding-top: .5px; color: #222; }
.notify { margin: 5px 0 0 9px; }
.watermark { position: absolute; left: 41px; top: 11px; color: rgba(255,255,255,.5); font-size: 6.800px; white-space: nowrap; }
```
FILE: script.js
```js
const H = [], V = [];

// Horizontal ruler: zero sits at the left text margin, two characters per labelled step.
const x0 = 305.6, step = 8.475;
H.push('<rect x="215.500" y="86.500" width="461" height="7" fill="#cdd1d6" stroke="#a0a5ac" stroke-width=".7"/>');
H.push('<rect x="305" y="87" width="347" height="6.300" fill="#fff"/>');
for (let n = -10; n <= 43; n++) {
  const x = x0 + n * step;
  if (n % 2 === 0 && n !== 0) H.push(`<text class="rn" x="${x}" y="92.200">${Math.abs(n)}</text>`);
  for (const d of [-4.2, 4.2]) {
    if (n % 2 === 0 && x + d < 676 && x + d > 217) H.push(`<path d="M${x + d} 89v3" stroke="#777" stroke-width=".7"/>`);
  }
  if (n > 0 && n % 2 === 0) H.push(`<path d="M${x - 1} 94.500v1.500" stroke="#888" stroke-width=".8"/>`);
}
H.push('<path d="M303.500 86h4v2.500l-2 1.500 2 1.800v4.200h-4v-4.200l2-1.800-2-1.500zM303.500 93h4" fill="#eee" stroke="#888" stroke-width=".7"/>');
H.push('<path d="M650.500 94v-2.500l2-1.800 2 1.800V94z" fill="#eee" stroke="#888" stroke-width=".7"/>');
document.getElementById('hruler').innerHTML = H.join('');

// Vertical ruler
const y0 = 129, vs = 12.04;
V.push('<rect x="2.500" y="106.500" width="7.500" height="358" fill="#cdd1d6" stroke="#a0a5ac" stroke-width=".7"/>');
V.push('<rect x="3" y="131" width="6.500" height="246" fill="#fff"/>');
for (let n = -1; n <= 27; n++) {
  const y = y0 + n * vs;
  if (n !== 0) V.push(`<text class="rn" transform="translate(8 ${y}) rotate(-90)">${Math.abs(n)}</text>`);
  V.push(`<path d="M5 ${y + vs / 2}h3" stroke="#777" stroke-width=".7"/>`);
}
document.getElementById('vruler').innerHTML = V.join('');
```
